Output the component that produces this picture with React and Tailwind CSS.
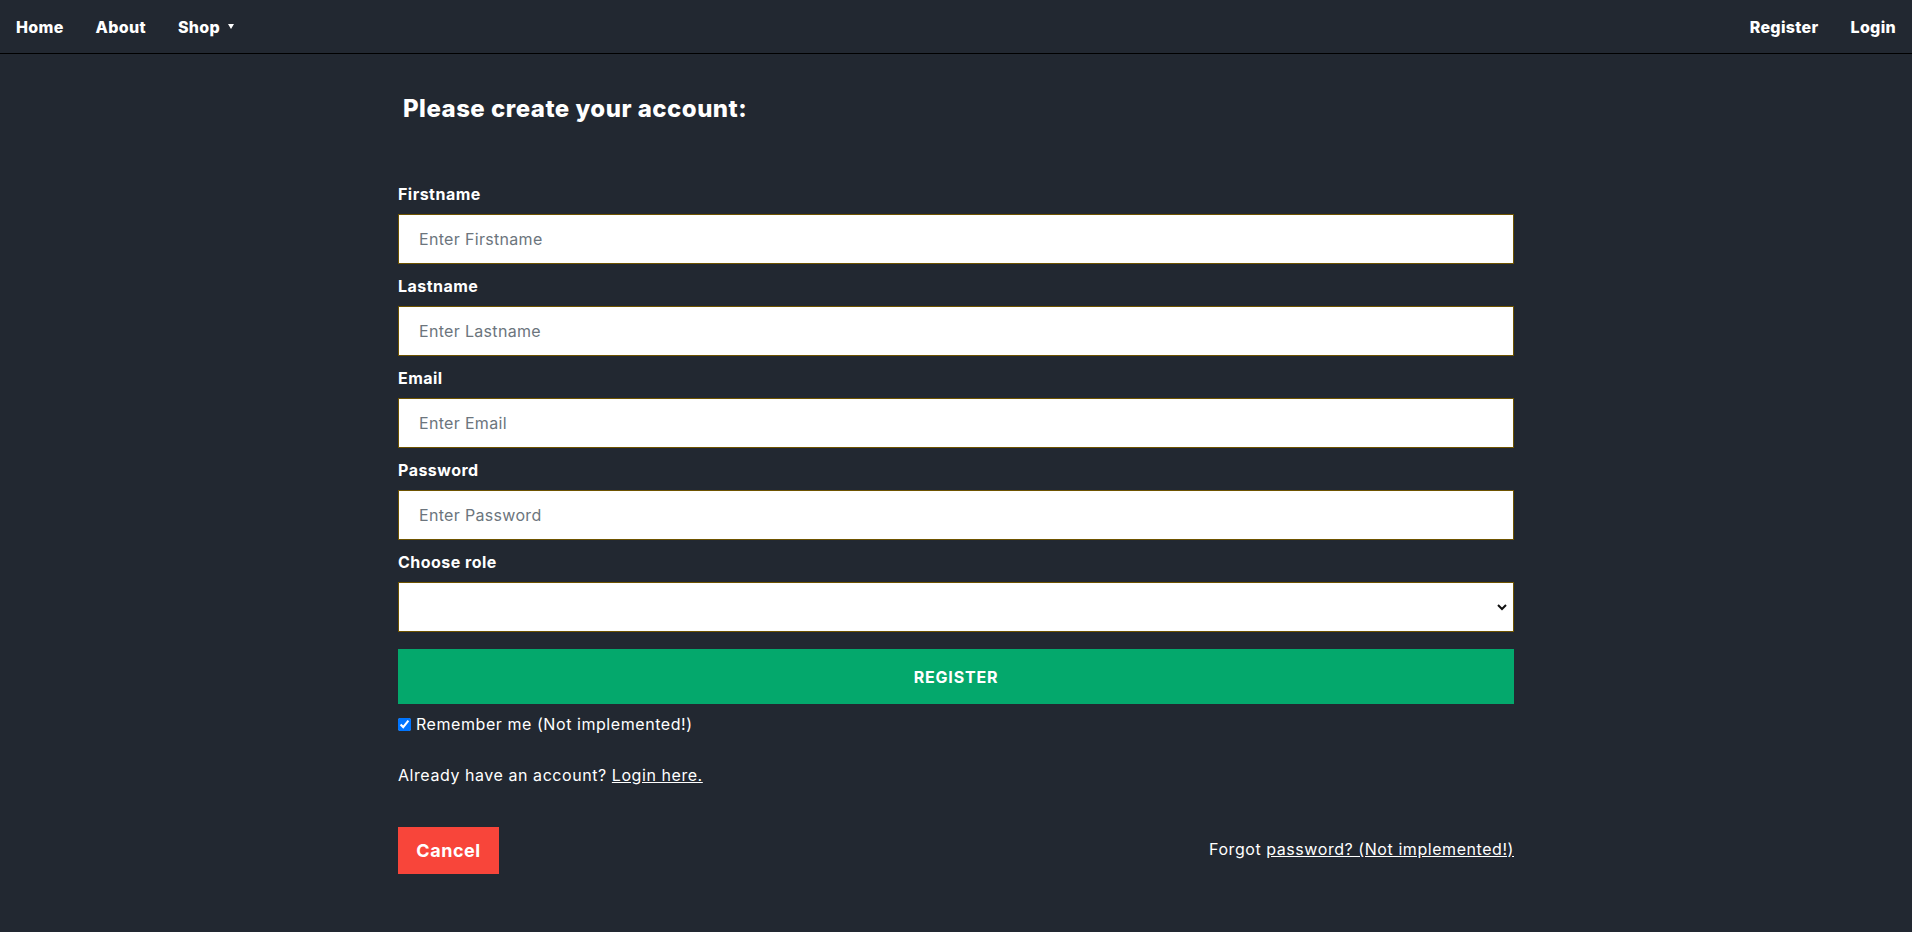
import React from "react";

const font = { fontFamily: "Inter, 'Open Sans', sans-serif" };

function Field({ label, placeholder, type = "text" }) {
  return (
    <div className="mt-[10px] first:mt-0">
      <label className="block text-[16px] leading-6 font-bold tracking-[0.03em] text-white mb-2">
        {label}
      </label>
      <input
        type={type}
        placeholder={placeholder}
        className="block w-full h-[50px] bg-white border border-[#6e5300] px-[20px] text-[16px] tracking-[0.02em] text-gray-800 placeholder:text-[#6c757d] outline-none"
      />
    </div>
  );
}

export default function App() {
  return (
    <div className="min-h-[932px] bg-[#222831] text-white" style={font}>
      <nav className="h-[54px] flex items-center justify-between px-4 border-b border-black">
        <div className="flex items-center gap-8 text-[16px] font-extrabold tracking-[0.02em]">
          <a>Home</a>
          <a>About</a>
          <a className="flex items-center gap-[8px]">
            Shop
            <span className="inline-block w-0 h-0 border-l-[3.5px] border-r-[3.5px] border-t-[5px] border-l-transparent border-r-transparent border-t-white" />
          </a>
        </div>
        <div className="flex items-center gap-8 text-[16px] font-extrabold tracking-[0.02em]">
          <a>Register</a>
          <a>Login</a>
        </div>
      </nav>

      <main className="max-w-[1116px] mx-auto pt-[40px] tracking-[0.035em]">
        <h2 className="pl-[5px] text-[24px] leading-[29px] font-extrabold tracking-[0.02em]">
          Please create your account:
        </h2>

        <form className="mt-[59px]">
          <Field label="Firstname" placeholder="Enter Firstname" />
          <Field label="Lastname" placeholder="Enter Lastname" />
          <Field label="Email" placeholder="Enter Email" type="email" />
          <Field label="Password" placeholder="Enter Password" type="password" />
          <div className="mt-[10px]">
            <label className="block text-[16px] leading-6 font-bold tracking-[0.03em] text-white mb-2">
              Choose role
            </label>
            <div className="relative">
              <select className="block w-full h-[50px] bg-white border border-[#6e5300] px-[20px] text-[16px] text-gray-800 appearance-none outline-none">
                <option></option>
              </select>
              <svg
                className="absolute right-[6px] top-1/2 -translate-y-1/2 pointer-events-none"
                width="12"
                height="12"
                viewBox="0 0 12 12"
              >
                <path d="M2 4 L6 8 L10 4" fill="none" stroke="#111" strokeWidth="2" />
              </svg>
            </div>
          </div>

          <button
            type="button"
            className="mt-[17px] w-full h-[55px] bg-[#04a86c] text-white font-bold text-[16px] tracking-[0.05em] uppercase"
          >
            Register
          </button>

          <label className="flex items-center gap-[5px] mt-[8px] h-6 text-[16px]">
            <input type="checkbox" defaultChecked className="w-[13px] h-[13px] m-0" />
            Remember me (Not implemented!)
          </label>

          <p className="mt-[27px] text-[16px] leading-6">
            Already have an account? <a className="underline">Login here.</a>
          </p>

          <div className="mt-[40px] flex items-center justify-between">
            <button
              type="button"
              className="w-[101px] h-[47px] bg-[#f8453a] text-white font-bold text-[18px] tracking-[0.03em]"
            >
              Cancel
            </button>
            <p className="text-[16px] -mt-[3px]">
              Forgot <a className="underline">password? (Not implemented!)</a>
            </p>
          </div>
        </form>
      </main>
    </div>
  );
}
